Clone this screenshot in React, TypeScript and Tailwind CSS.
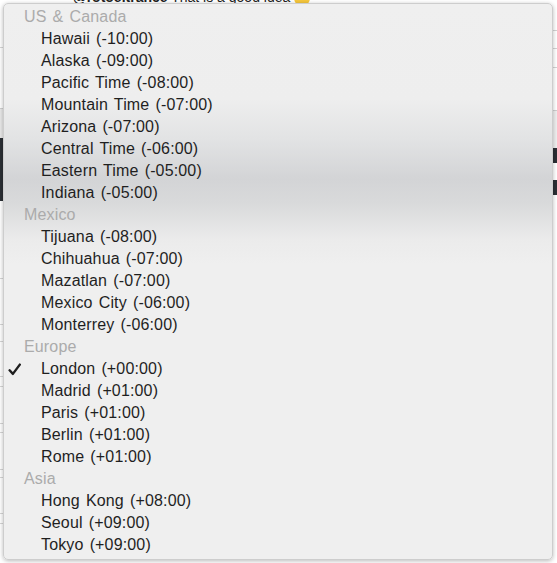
import React from "react";

type Seg = [number, string];

const leftSegs: Seg[] = [
  [48, "#ffffff"], [1, "#d6d6d6"], [61, "#ffffff"], [1, "#cfcfcf"], [29, "#e9e9e9"],
  [65, "#2b2f34"], [78, "#ffffff"], [1, "#d6d6d6"], [46, "#ffffff"], [1, "#d6d6d6"],
  [16, "#ffffff"], [1, "#d6d6d6"], [35, "#ffffff"], [1, "#d6d6d6"], [9, "#ffffff"],
  [1, "#d6d6d6"], [36, "#ffffff"], [1, "#d6d6d6"], [9, "#ffffff"], [1, "#d6d6d6"],
  [36, "#ffffff"], [1, "#d6d6d6"], [7, "#ffffff"], [1, "#d6d6d6"], [36, "#ffffff"],
  [1, "#d6d6d6"], [9, "#ffffff"], [1, "#d6d6d6"], [40, "#ffffff"],
];

const rightSegs: Seg[] = [
  [30, "#ffffff"], [1, "#d3d3d3"], [17, "#ffffff"], [1, "#d3d3d3"], [18, "#ffffff"],
  [1, "#d3d3d3"], [42, "#ffffff"], [1, "#cfcfcf"], [37, "#eeeeee"], [15, "#2b2f34"],
  [17, "#ffffff"], [15, "#2b2f34"], [368, "#ffffff"],
];

function Column({ segs, w }: { segs: Seg[]; w: string }) {
  return (
    <div className={`flex flex-col ${w} shrink-0`}>
      {segs.map(([h, c], i) => (
        <div key={i} style={{ height: h, background: c }} />
      ))}
    </div>
  );
}

const groups: { name: string; items: string[] }[] = [
  {
    name: "US & Canada",
    items: [
      "Hawaii (-10:00)",
      "Alaska (-09:00)",
      "Pacific Time (-08:00)",
      "Mountain Time (-07:00)",
      "Arizona (-07:00)",
      "Central Time (-06:00)",
      "Eastern Time (-05:00)",
      "Indiana (-05:00)",
    ],
  },
  {
    name: "Mexico",
    items: [
      "Tijuana (-08:00)",
      "Chihuahua (-07:00)",
      "Mazatlan (-07:00)",
      "Mexico City (-06:00)",
      "Monterrey (-06:00)",
    ],
  },
  {
    name: "Europe",
    items: [
      "London (+00:00)",
      "Madrid (+01:00)",
      "Paris (+01:00)",
      "Berlin (+01:00)",
      "Rome (+01:00)",
    ],
  },
  {
    name: "Asia",
    items: ["Hong Kong (+08:00)", "Seoul (+09:00)", "Tokyo (+09:00)"],
  },
];

function Check() {
  return (
    <svg width="13" height="13" viewBox="0 0 13 13">
      <path
        d="M1.6 7.3 L4.9 10.9 L11.8 1.6"
        fill="none"
        stroke="#1e1e1e"
        strokeWidth="2.4"
        strokeLinecap="round"
        strokeLinejoin="round"
      />
    </svg>
  );
}

export default function App() {
  const selected = "London (+00:00)";
  return (
    <div className="relative w-[557px] h-[563px] overflow-hidden bg-white font-['Liberation_Sans','Helvetica',Arial,sans-serif]">
      {/* background page */}
      <div className="flex w-full h-full">
        <Column segs={leftSegs} w="w-[3px]" />
        <div className="flex-1 overflow-hidden">
          <div className="-mt-[11px] pl-[70px] text-[14px] leading-[16px] text-[#222] whitespace-nowrap">
            <span className="font-bold">@rotoeltrance</span> That is a good idea{" "}
            <span className="inline-block w-[16px] h-[16px] rounded-full bg-[#f5c63c] align-middle" />
          </div>
        </div>
        <Column segs={rightSegs} w="w-[4px]" />
      </div>

      {/* dropdown menu */}
      <div className="absolute left-[3px] top-[3px] w-[550px] h-[557px] rounded-[5px] border border-[#cdcdcd] shadow-[0_1px_4px_rgba(0,0,0,0.28)] bg-[linear-gradient(to_bottom,#efefef_0px,#eeeeee_95px,#e2e3e4_135px,#d3d4d6_175px,#d9dadb_200px,#ebebeb_235px,#efefef_260px,#efefef_100%)] pt-[2px] pb-[3px] text-[16px] tracking-[0.15px] [word-spacing:1.5px]">
        {groups.map((g) => (
          <div key={g.name}>
            <div className="h-[22px] leading-[22px] pl-[20px] text-[#ababab] whitespace-nowrap">
              {g.name}
            </div>
            {g.items.map((it) => (
              <div key={it} className="flex items-center h-[22px] leading-[22px] text-[#1f1f1f] whitespace-nowrap">
                <div className="w-[37px] shrink-0 flex items-center pl-[4px]">
                  {it === selected ? <Check /> : null}
                </div>
                <span>{it}</span>
              </div>
            ))}
          </div>
        ))}
      </div>
    </div>
  );
}
